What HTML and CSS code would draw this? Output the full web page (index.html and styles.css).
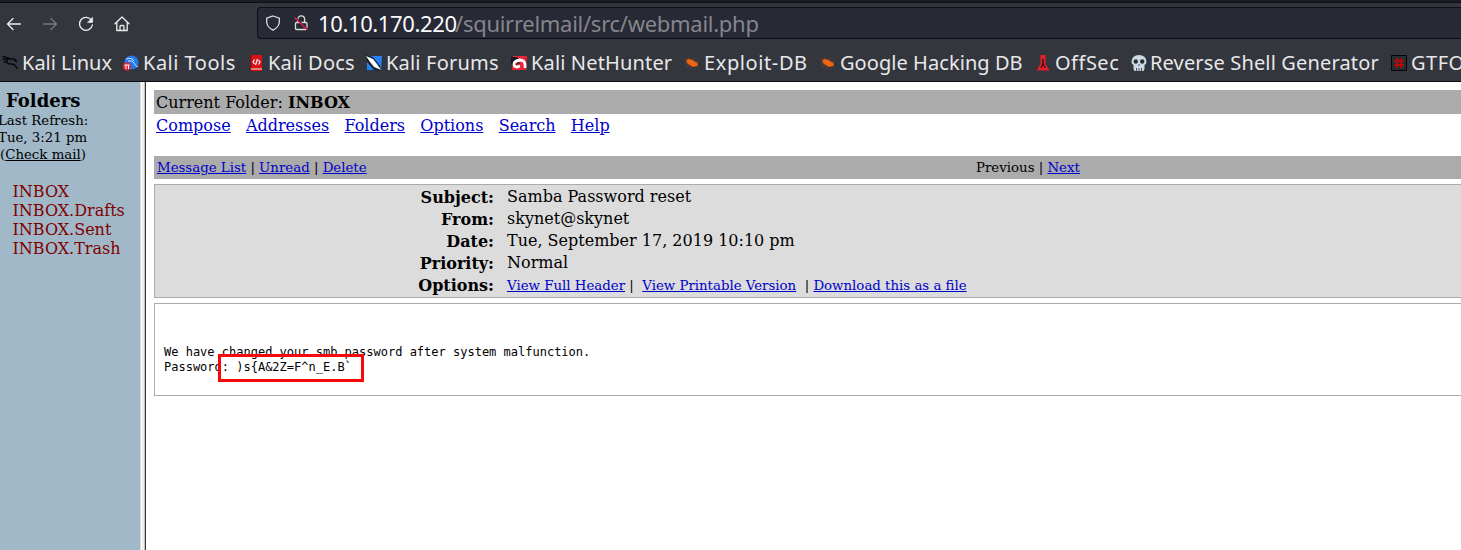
FILE: index.html
```html
<!DOCTYPE html>
<html lang="en">
<head>
<meta charset="utf-8">
<title>SquirrelMail</title>
<link rel="stylesheet" href="styles.css">
</head>
<body>
<header class="browser">
  <div class="tabstrip"></div>
  <div class="toolbar">
    <nav class="nav">
      <svg class="nav-icon" viewBox="0 0 16 16"><path d="M14.500 8H2M7 2.500 1.500 8 7 13.500"/></svg>
      <svg class="nav-icon dim" viewBox="0 0 16 16"><path d="M1.500 8H14M9 2.500 14.500 8 9 13.500"/></svg>
      <svg class="nav-icon" viewBox="0 0 16 16"><path d="M13.500 4.300A6.500 6.500 0 1 0 14.400 9"/><path class="solid" d="M14.600 1.500v5H9.800z"/></svg>
      <svg class="nav-icon" viewBox="0 0 16 16"><path d="M1 7.700 8 1l7 6.700M2.800 6.500V14.500h10.400V6.500M6 14.500v-4q0-1 1-1h2q1 0 1 1v4"/></svg>
    </nav>
    <div class="urlbar">
      <svg class="shield" viewBox="0 0 16 16"><path d="M8 1 14.300 3.200v4.300Q13.500 12.500 8 15.200 2.500 12.500 1.700 7.500V3.200z"/></svg>
      <svg class="lock" viewBox="0 0 16 16"><path d="M4.800 7.500V4.300a3.400 3.400 0 0 1 6.800 0v3.200M3.500 7.500h9.500q1 0 1 1v5q0 1-1 1H3.500q-1 0-1-1v-5q0-1 1-1z"/><path class="gap" d="M1.500 1.500l13.500 13"/><path class="slash" d="M1.500 2.500l13 12.500"/></svg>
      <div class="url"><span class="host">10.10.170.220</span><span class="path">/squirrelmail/src/webmail.php</span></div>
    </div>
  </div>
  <nav class="bookmarks">
    <a class="bm linux"><svg viewBox="0 0 16 16"><path fill="none" stroke="#08090b" stroke-width="1.500" d="M.5 1.500 6 3l3 1.500M.5 4.500l6-.5M8 4q5-1 6 2M5 5q-1 4 4 4 5 0 6 5M2 7.500 5 6M12 5l3 2"/></svg><span>Kali Linux</span></a>
    <a class="bm tools"><svg viewBox="0 0 16 16"><circle cx="8.500" cy="7.500" r="7" fill="#2378ef"/><path fill="none" stroke="#cce6ff" d="M3 4q6-2 8 2M5 6q5-1 6 2t4 4"/><circle cx="4" cy="11.500" r="4" fill="#e72431"/><path fill="none" stroke="#fff" d="M1.500 10h5M3 10v4M5.500 10v4"/></svg><span>Kali Tools</span></a>
    <a class="bm docs"><svg viewBox="0 0 16 16"><path fill="#d91117" d="M2 0h12v16H2z"/><path fill="#831018" d="M2 0h1.500v16H2z"/><path fill="#eed" d="M3 13.500h11v1H3z"/><path fill="none" stroke="#fff" stroke-width="1.200" d="M6.500 4.500 5 7l1.500 2m4-4L12 7l-1.500 2.500M9.500 4 7.500 10"/></svg><span>Kali Docs</span></a>
    <a class="bm forums"><svg viewBox="0 0 16 16"><path fill="#2583f7" d="M1 1h15l-1 14H1z"/><path fill="#16202f" d="M0 0 7 2l7 9 1 5-7-1-7-8z"/><path fill="#fff" d="M0 1 7 4l4 5 4 6-7-3-4-5z"/></svg><span>Kali Forums</span></a>
    <a class="bm hunter"><svg viewBox="0 0 16 16"><path fill="#e92238" d="M2 1h14l-1 14H1z"/><path fill="#171821" d="M0 2h6l3 3-5 2-3 4-1-3z"/><path fill="none" stroke="#fff" stroke-width="2.800" d="M14 13q1-8-5-8-6 1-6 4 0 3 3 3l3-1"/><path fill="none" stroke="#171821" d="M5 10q1-3 4-2"/></svg><span>Kali NetHunter</span></a>
    <a class="bm exploit"><svg viewBox="0 0 16 16"><path fill="#ed650f" d="M3 5q2-2 5 0l4 2q3 2 1 4l-4 1-5-3-2-3z"/><path fill="none" stroke="#96421c" stroke-width=".7" d="M5 5V2M8 5l3-2M11 7h4M4 8 1 9m5 1-4 2m7-1-3 3m7-3 2 2M4 5 1 4"/></svg><span>Exploit-DB</span></a>
    <a class="bm ghdb"><svg viewBox="0 0 16 16"><path fill="#ed650f" d="M3 5q2-2 5 0l4 2q3 2 1 4l-4 1-5-3-2-3z"/><path fill="none" stroke="#96421c" stroke-width=".7" d="M5 5V2M8 5l3-2M11 7h4M4 8 1 9m5 1-4 2m7-1-3 3m7-3 2 2M4 5 1 4"/></svg><span>Google Hacking DB</span></a>
    <a class="bm offsec"><svg viewBox="0 0 16 16"><path fill="#e32027" d="M5.500 0h5v9l4 6.500h-13l4-6.500z"/><path fill="#2a1015" d="M7.300 4h1.400v5l2 4H9v-2H7v2H5.300l2-4z"/></svg><span>OffSec</span></a>
    <a class="bm shell"><svg viewBox="0 0 16 16"><path fill="#cdd9e2" d="M8 0q7 0 7.500 7 0 2-2 3v4l-1 2H3.500l-1-2v-4q-2-1-2-3Q1 0 8 0z"/><circle cx="4.800" cy="6.500" r="2.200" fill="#292e35"/><circle cx="11.200" cy="6.500" r="2.200" fill="#292e35"/><path stroke="#4b535c" d="M8 9v2M5.500 13v3M8 13v3M10.500 13v3"/></svg><span>Reverse Shell Generator</span></a>
    <a class="bm gtfo"><svg viewBox="0 0 16 16"><path fill="#292c31" stroke="#050607" d="M.5.5h15v15H.5z"/><path fill="none" stroke="#c80508" stroke-width="1.600" d="M6.500 3 6 13M10.500 3 10 13M3 6h10M3 10h10"/></svg><span>GTFO</span></a>
  </nav>
</header>
<div class="frames">
  <aside class="folders">
    <h1>Folders</h1>
    <p class="refresh">Last Refresh:<br>Tue, 3:21 pm<br><span class="check">(<a>Check mail</a>)</span></p>
    <ul class="mailboxes"><li>INBOX</li><li>INBOX.Drafts</li><li>INBOX.Sent</li><li>INBOX.Trash</li></ul>
  </aside>
  <div class="splitter"></div>
  <main class="mail">
    <div class="current">Current Folder: <b>INBOX</b></div>
    <nav class="menu"><a>Compose</a><a>Addresses</a><a>Folders</a><a>Options</a><a>Search</a><a>Help</a></nav>
    <div class="actions"><div class="left"><a>Message List</a> | <a>Unread</a> | <a>Delete</a></div><div>Previous | <a>Next</a></div></div>
    <dl class="headers">
      <dt>Subject:</dt><dd>Samba Password reset</dd>
      <dt>From:</dt><dd>skynet@skynet</dd>
      <dt>Date:</dt><dd>Tue, September 17, 2019 10:10 pm</dd>
      <dt>Priority:</dt><dd>Normal</dd>
      <dt>Options:</dt><dd class="options"><a>View Full Header</a>&nbsp;|&nbsp; <a>View Printable Version</a>&nbsp; |&nbsp;<a>Download this as a file</a></dd>
    </dl>
    <div class="message"><pre>We have changed your smb password after system malfunction.
Password: )s{A&amp;2Z=F^n_E.B`</pre><div class="highlight"></div></div>
  </main>
</div>
</body>
</html>
```
FILE: styles.css
```css
* { box-sizing: border-box; }
body { margin: 0; width: 1461px; height: 550px; overflow: hidden; background: #fff; color: #000; font: 16px/19px "DejaVu Serif", serif; display: flex; flex-direction: column; }
.browser { flex: none; height: 82px; background: #33363d; border-bottom: 1px solid #0c0e13; font-family: "Noto Sans", sans-serif; overflow: hidden; }
.tabstrip { height: 3px; background: #1b1d21; border-bottom: 1px solid #0d0f13; }
.toolbar { display: flex; height: 41px; padding-top: 4px; }
.nav { display: flex; gap: 20px; width: 257px; padding: 9px 0 0 6px; }
.nav-icon { width: 16px; height: 16px; fill: none; stroke: #eee; stroke-width: 1.3; stroke-linecap: round; stroke-linejoin: round; overflow: visible; }
.nav-icon.dim { stroke: #77797d; }
.nav-icon .solid { fill: #eee; stroke-width: .6; }
.urlbar { flex: 1; height: 32px; display: flex; align-items: center; background: #272935; border: 1px solid #0d0f14; border-right: 0; border-radius: 4px 0 0 4px; padding-left: 7px; }
.urlbar svg { width: 16px; height: 16px; fill: none; stroke: #ddd; stroke-width: 1.3; flex: none; }
.lock { margin-left: 12px; }
.urlbar .gap { stroke: #272935; }
.urlbar .slash { stroke: #e81e4d; }
.url { display: flex; margin-left: 9px; font-size: 22px; line-height: 30px; white-space: nowrap; color: #85868b; }
.host { color: #fbfbfe; width: 137px; letter-spacing: -.38px; }
.path { letter-spacing: -.28px; }
.bookmarks { display: flex; height: 37px; padding-left: 2px; align-items: center; color: #e8e8ea; font-size: 20px; line-height: 28px; white-space: nowrap; }
.bm { display: flex; align-items: center; gap: 4px; flex: none; }
.bm svg { width: 16px; height: 16px; flex: none; }
.linux { width: 121px; }
.tools { width: 125px; letter-spacing: .5px; }
.docs { width: 118px; letter-spacing: .2px; }
.forums { width: 145px; letter-spacing: .2px; }
.hunter { width: 173px; letter-spacing: .15px; }
.exploit { width: 136px; letter-spacing: .6px; }
.ghdb { width: 215px; letter-spacing: .06px; }
.offsec { width: 96px; letter-spacing: .5px; }
.shell { width: 260px; gap: 3px; letter-spacing: .15px; }
.gtfo { letter-spacing: .5px; }
.frames { flex: 1; display: flex; min-height: 0; }
.folders { width: 140px; flex: none; background: #a0b8c8; }
.folders h1 { margin: 0; padding: 8px 0 0 6px; font-size: 18px; line-height: 22px; }
.refresh { margin: 0 0 0 -2px; font-size: 13.333px; line-height: 17px; }
.check { padding-left: 2px; }
.refresh a { text-decoration: underline; }
.mailboxes { margin: 19px 0 0; padding: 0 0 0 12.5px; list-style: none; color: #800000; }
.splitter { width: 6px; flex: none; background: #f2f0ee; border-left: 1px solid #ddd9d5; border-right: 1px solid #333; box-shadow: inset 1px 0 #fff, inset -1px 0 #c9c5c1; }
.mail { flex: 1; min-width: 0; padding: 8px 0 0 8px; }
.mail a { color: #0000cc; text-decoration: underline; }
.current { height: 24px; padding: 3px 2px; background: #ababab; }
.menu { display: flex; gap: 15.3px; padding: 2px 2px 0; height: 42px; }
.actions { display: flex; height: 23px; padding: 3px; background: #ababab; font-size: 13.333px; line-height: 17px; }
.left { width: 819px; }
.headers { display: grid; grid-template-columns: 339px 1fr; grid-auto-rows: 22px; column-gap: 13px; margin: 5px 0; height: 114px; padding: 1px 0; border: 1px solid #ababab; border-right: 0; background: #dcdcdc; }
.headers dt { font-weight: bold; text-align: right; padding-top: 2px; }
.headers dd { margin: 0; padding-top: 1px; }
.headers .options { font-size: 13.333px; padding-top: 2px; }
.message { position: relative; height: 93px; border: 1px solid #ababab; border-right: 0; padding: 41px 9px 0; }
.message pre { margin: 0; font: 12px/15px "DejaVu Sans Mono", monospace; }
.highlight { position: absolute; left: 63px; top: 50px; width: 146px; height: 28px; border: 3px solid #f80808; }
```
